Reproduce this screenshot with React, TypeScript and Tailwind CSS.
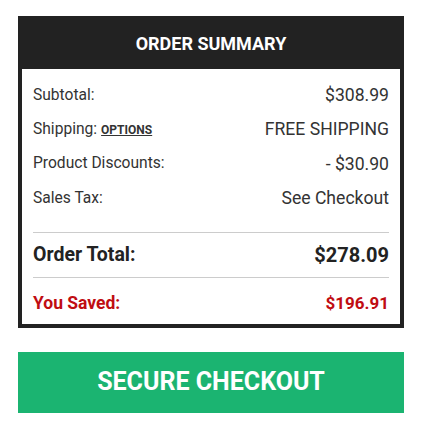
const rows = [
  { label: 'Subtotal:', value: '$308.99' },
  { label: 'Shipping:', value: 'FREE SHIPPING', link: 'OPTIONS' },
  { label: 'Product Discounts:', value: '- $30.90' },
  { label: 'Sales Tax:', value: 'See Checkout' },
];

export default function App() {
  return (
    <div className="h-[427px] w-[421px] overflow-hidden bg-white pt-4 font-['Roboto','Liberation_Sans',sans-serif]">
      {/* Summary box */}
      <div className="mx-[18px] w-[386px] border-4 border-t-0 border-[#222]">
        <div className="flex h-[53px] items-center justify-center bg-[#222] pt-[2px] text-[18px] font-bold text-white">
          ORDER SUMMARY
        </div>
        <div className="px-[11px] pt-[9px] text-[#333]">
          {rows.map((row) => (
            <div key={row.label} className="flex h-[34.4px] items-center justify-between">
              <span className="text-[15.6px]">
                {row.label}
                {row.link && (
                  <a className="ml-1 text-[12px] font-bold underline">{row.link}</a>
                )}
              </span>
              <span className="text-[17.6px]">{row.value}</span>
            </div>
          ))}
          <div className="mt-[16px] border-t border-[#ccc]" />
          <div className="flex h-[44px] items-center justify-between font-bold text-[#222]">
            <span className="text-[19.5px]">Order Total:</span>
            <span className="text-[20px]">$278.09</span>
          </div>
          <div className="border-t border-[#ccc]" />
          <div className="flex h-[46px] items-center justify-between pt-[6px] font-bold text-[#c00d12]">
            <span className="text-[17.5px]">You Saved:</span>
            <span className="text-[17px]">$196.91</span>
          </div>
        </div>
      </div>

      {/* Checkout button */}
      <button className="mx-[18px] mt-6 flex h-[61px] w-[386px] items-center justify-center bg-[#1bb471] text-[25px] font-bold text-white">
        SECURE CHECKOUT
      </button>
    </div>
  );
}
